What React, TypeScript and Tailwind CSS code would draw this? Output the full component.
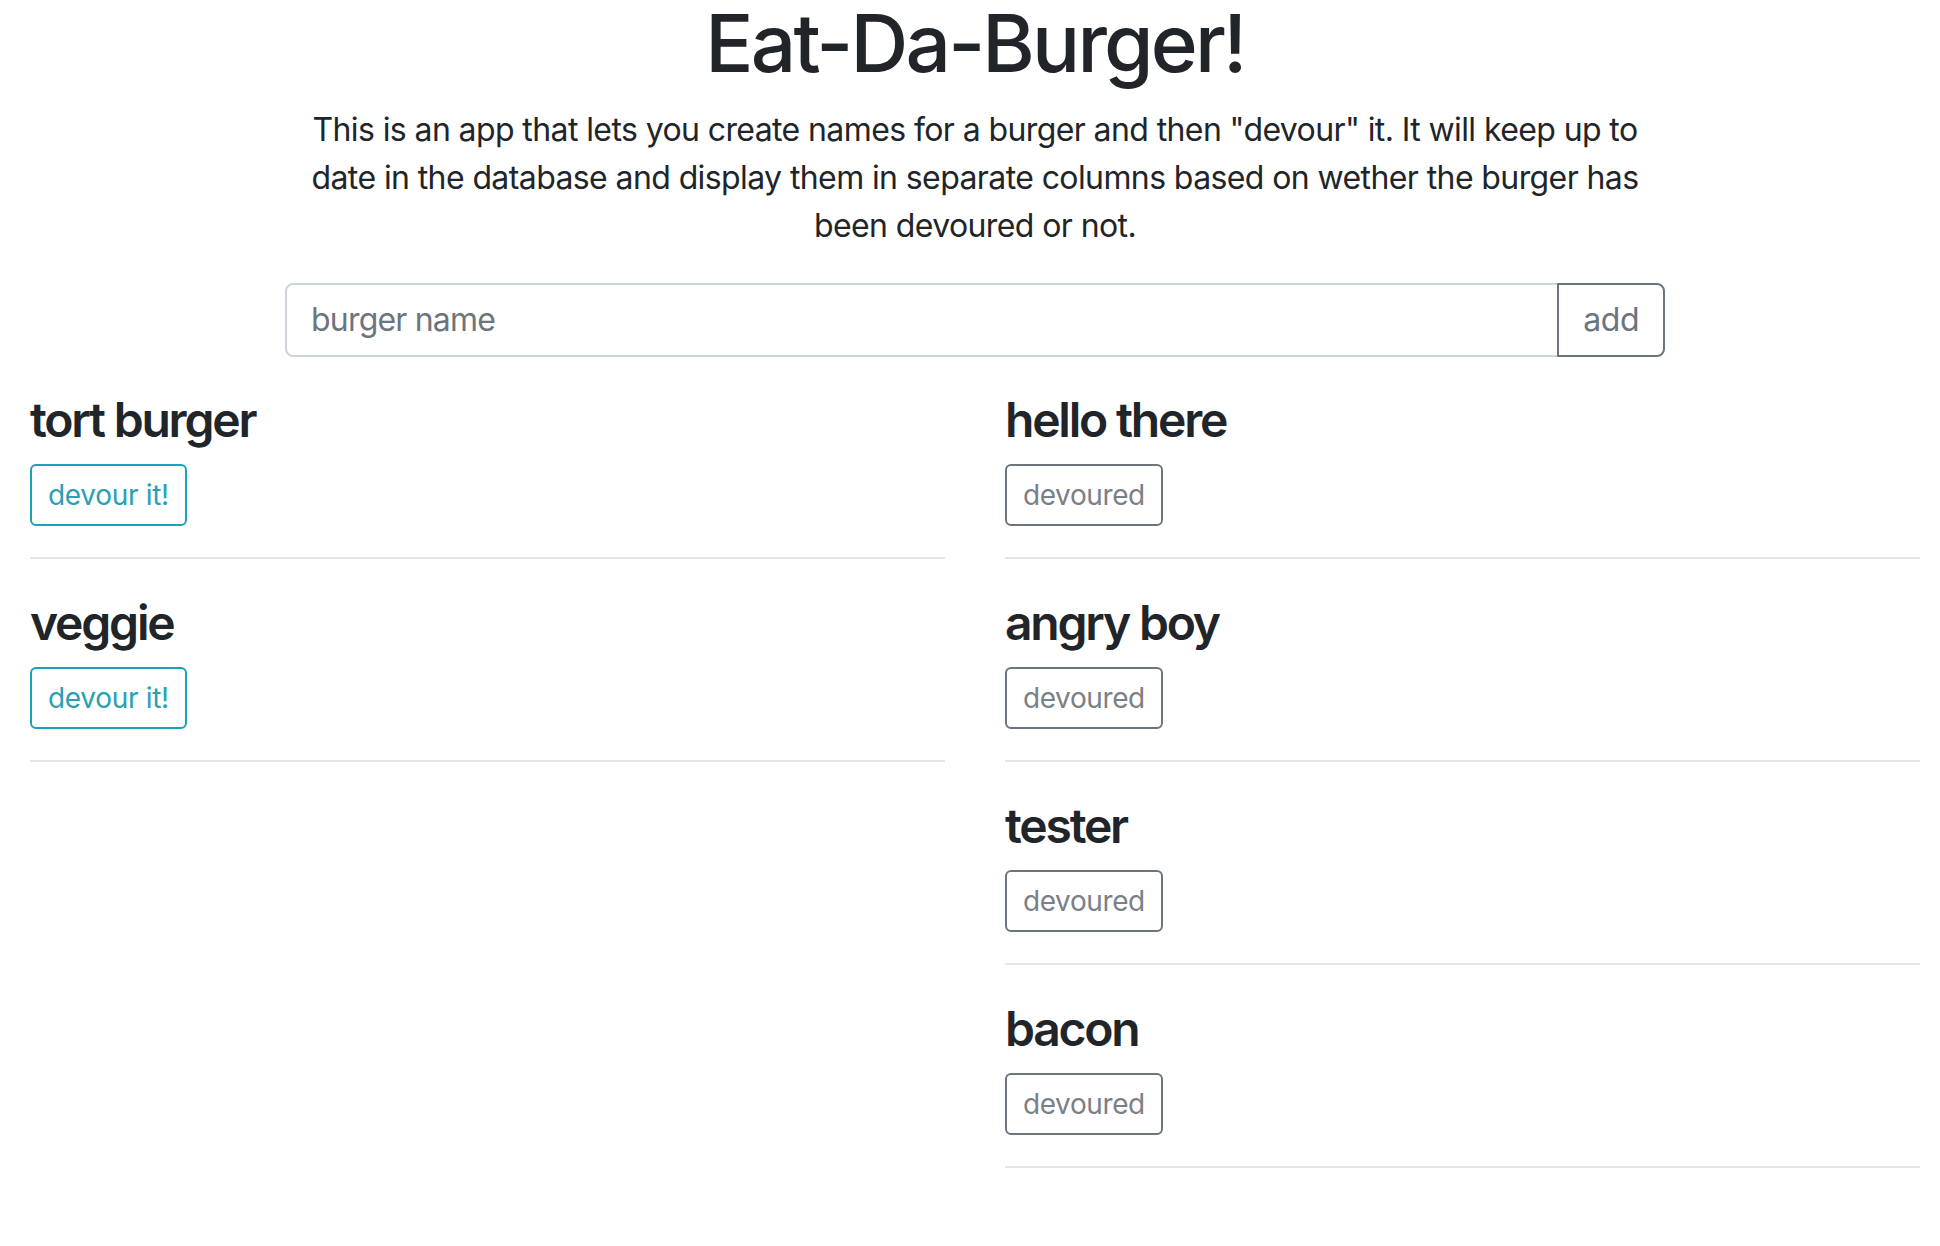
import React, { useState } from "react";

type Burger = { id: number; name: string; devoured: boolean };

const initialBurgers: Burger[] = [
  { id: 1, name: "tort burger", devoured: false },
  { id: 2, name: "veggie", devoured: false },
  { id: 3, name: "hello there", devoured: true },
  { id: 4, name: "angry boy", devoured: true },
  { id: 5, name: "tester", devoured: true },
  { id: 6, name: "bacon", devoured: true },
];

function BurgerRow({ burger, onDevour }: { burger: Burger; onDevour: (id: number) => void }) {
  return (
    <div className="pt-[35px] first:pt-0">
      <h4 className="text-[48px] leading-[58px] font-semibold tracking-[-2.2px] text-[#212529] mb-[15px]">{burger.name}</h4>
      {burger.devoured ? (
        <button
          disabled
          className="h-[62px] px-[16px] text-[28px] leading-[42px] tracking-[-0.4px] border-2 border-[#6c757d] rounded-[6px] text-[#7b8086] bg-white"
        >
          devoured
        </button>
      ) : (
        <button
          onClick={() => onDevour(burger.id)}
          className="h-[62px] px-[16px] text-[28px] leading-[42px] tracking-[-0.3px] border-2 border-[#17a2b8] rounded-[6px] text-[#2a9fb5] bg-white"
        >
          devour it!
        </button>
      )}
      <hr className="mt-[31px] border-0 border-t-2 border-[#e6e6e6]" />
    </div>
  );
}

export default function App() {
  const [burgers, setBurgers] = useState<Burger[]>(initialBurgers);
  const [name, setName] = useState("");

  const addBurger = () => {
    if (!name.trim()) return;
    setBurgers([...burgers, { id: Date.now(), name: name.trim(), devoured: false }]);
    setName("");
  };

  const devour = (id: number) => {
    setBurgers(burgers.map((b) => (b.id === id ? { ...b, devoured: true } : b)));
  };

  const fresh = burgers.filter((b) => !b.devoured);
  const eaten = burgers.filter((b) => b.devoured);

  return (
    <div className="w-full min-h-screen overflow-hidden bg-white" style={{ fontFamily: "Inter, 'Noto Sans', sans-serif" }}>
      <div className="w-[1950px] text-[#212529]">
        <div className="w-[1440px] mx-auto px-[30px]">
          <h1 className="text-center text-[80px] leading-[86px] font-medium tracking-[-2.8px]">Eat-Da-Burger!</h1>
          <p className="mt-[20px] text-center text-[32px] leading-[48px] tracking-[-0.6px] whitespace-nowrap">
            This is an app that lets you create names for a burger and then "devour" it. It will keep up to
            <br />
            date in the database and display them in separate columns based on wether the burger has
            <br />
            been devoured or not.
          </p>
          <div className="mt-[33px] flex h-[74px]">
            <input
              value={name}
              onChange={(e) => setName(e.target.value)}
              placeholder="burger name"
              className="flex-1 min-w-0 px-[24px] text-[32px] tracking-[-0.8px] border-2 border-[#ced4da] rounded-l-[8px] outline-none placeholder:text-[#6c757d]"
            />
            <button
              onClick={addBurger}
              className="-ml-[2px] px-[24px] text-[32px] tracking-[-0.5px] text-[#6c757d] border-2 border-[#6c757d] rounded-r-[8px] bg-white"
            >
              add
            </button>
          </div>
        </div>

        <div className="mt-[34px] grid grid-cols-2 gap-[60px] px-[30px]">
          <div>
            {fresh.map((b) => (
              <BurgerRow key={b.id} burger={b} onDevour={devour} />
            ))}
          </div>
          <div>
            {eaten.map((b) => (
              <BurgerRow key={b.id} burger={b} onDevour={devour} />
            ))}
          </div>
        </div>
      </div>
    </div>
  );
}
